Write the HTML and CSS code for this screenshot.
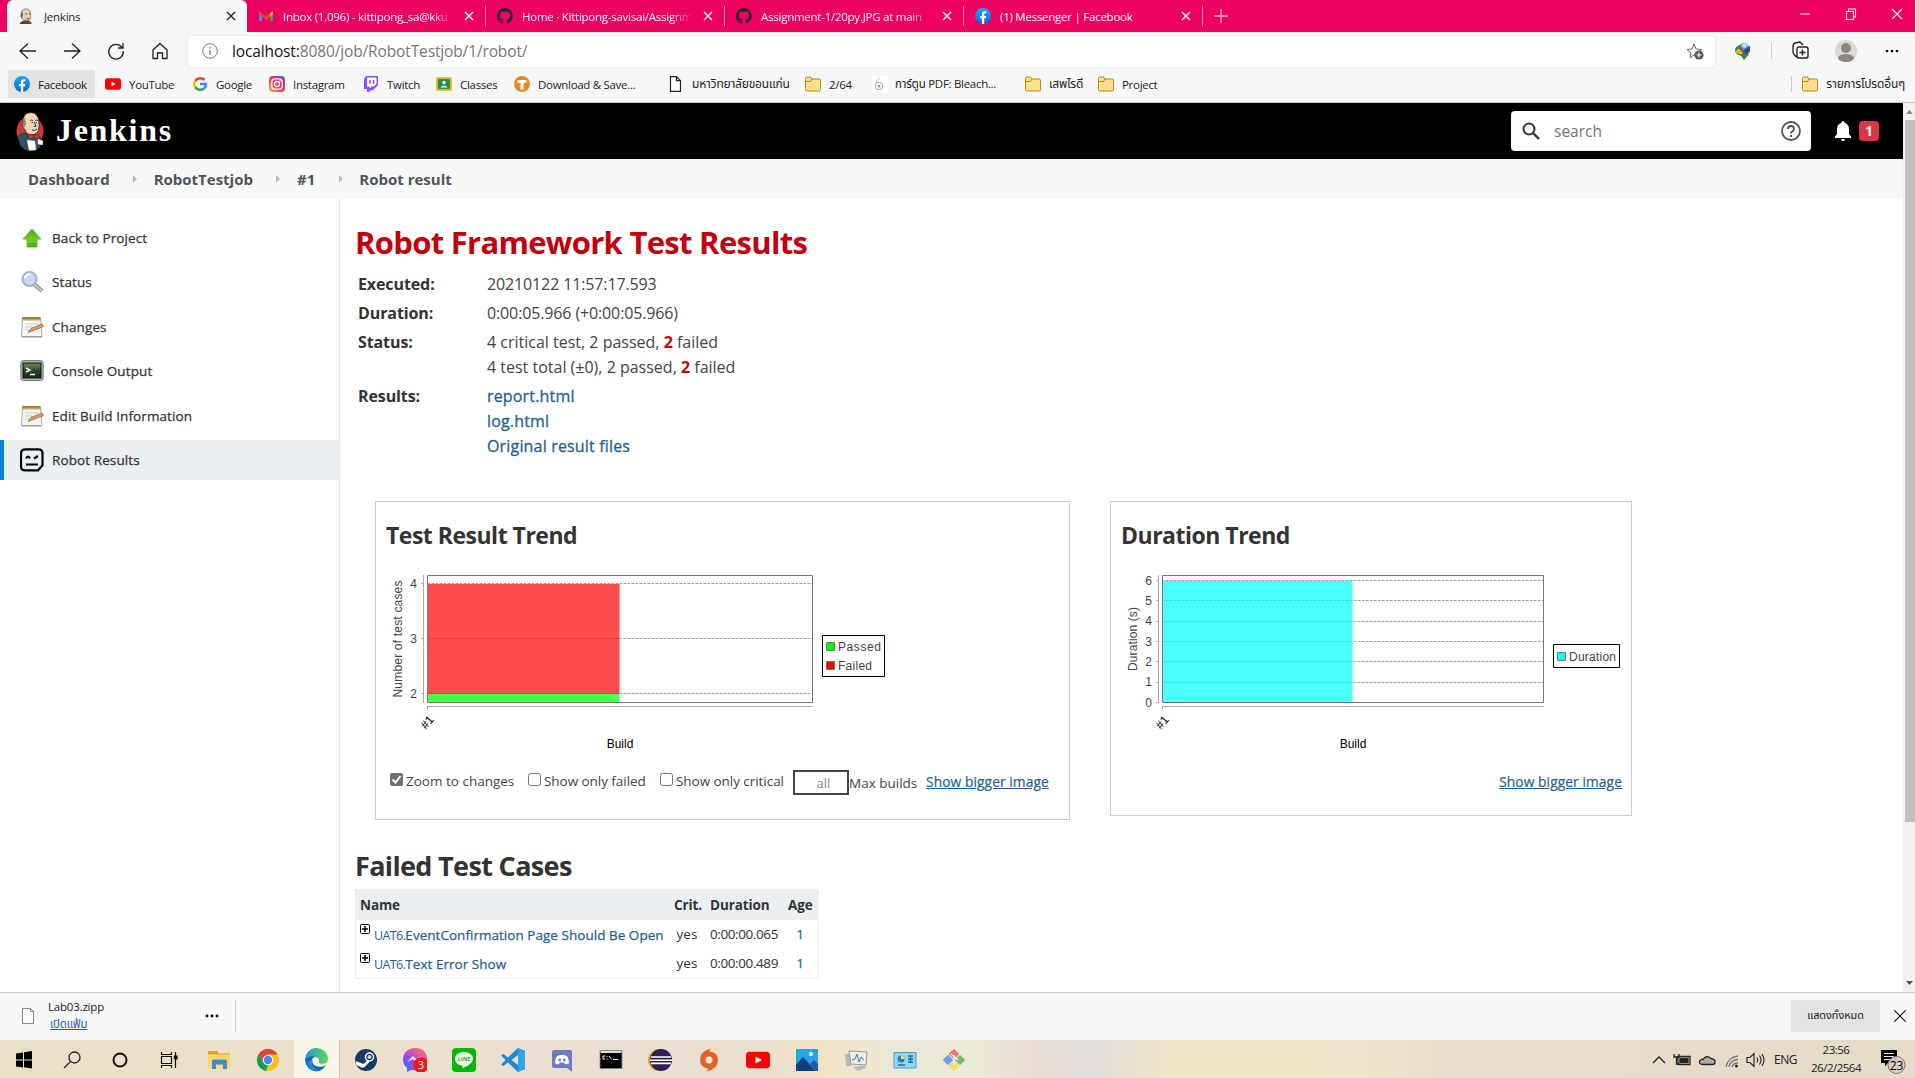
FILE: index.html
```html
<!DOCTYPE html>
<html lang="en">
<head>
<meta charset="utf-8">
<title>Jenkins</title>
<link rel="stylesheet" href="styles.css">
</head>
<body>
<svg class="defs" width="0" height="0">
  <defs>
    <linearGradient id="insta" x1="0" y1="1" x2="1" y2="0"><stop offset="0" stop-color="#fdc14b"/><stop offset=".4" stop-color="#f4423f"/><stop offset=".7" stop-color="#c72e92"/><stop offset="1" stop-color="#5b4fd6"/></linearGradient>
    <linearGradient id="msg" x1="0" y1="1" x2=".7" y2="0"><stop offset="0" stop-color="#0a8cff"/><stop offset=".5" stop-color="#9a45f5"/><stop offset="1" stop-color="#ff6a72"/></linearGradient>
    <linearGradient id="fb" x1="0" y1="0" x2="0" y2="1"><stop offset="0" stop-color="#1ba7f8"/><stop offset="1" stop-color="#0866d8"/></linearGradient>
    <linearGradient id="edgeTop" x1="0" y1="0" x2="1" y2="0"><stop offset="0" stop-color="#2196d8"/><stop offset="1" stop-color="#5fd85a"/></linearGradient>
    <linearGradient id="arrow" x1="0" y1="0" x2="0" y2="1"><stop offset="0" stop-color="#4e9a1a"/><stop offset=".6" stop-color="#6fd32a"/><stop offset="1" stop-color="#4aa516"/></linearGradient>
    <linearGradient id="term" x1="0" y1="0" x2="0" y2="1"><stop offset="0" stop-color="#6d8f5b"/><stop offset=".5" stop-color="#2b4a2b"/><stop offset="1" stop-color="#14281a"/></linearGradient>
    <symbol id="i-jenkins" viewBox="0 0 28 40">
      <ellipse cx="14" cy="20" rx="13.500" ry="14.500" fill="#d33833"/>
      <path d="M2 25Q6 21 12 22l8 1 5 4-1 9-4 3H9L4 34Z" fill="#335061" stroke="#1d2f3a" stroke-width=".6"/>
      <path d="M7 12Q6 2 15 1.500Q23 2 23 12Q24 22 18 23.500Q11 25 9 19Q6 17 7 12Z" fill="#f0d6b7" stroke="#231f20" stroke-width=".8"/>
      <path d="M8 8Q5 12 8 17L10 13 9 7Z" fill="#8b8176"/>
      <path d="M14 9.500q1.500-1 3 0m2.500 0q1.500-1 2.500 0M15.500 11.500h1.500m3 0h1M16 19q3 1.500 5-1M18.500 11l1.500 4.500h-2" fill="none" stroke="#231f20" stroke-width=".9"/>
      <path d="M13 23l5 2 5-2v5l-5-2-5 2z" fill="#d33833" stroke="#81251f" stroke-width=".6"/>
      <path d="M11 29l8 1 1 9-7 .5zM22 28l5 2-.5 4-4.500-1z" fill="#fff" stroke="#bbb" stroke-width=".4"/>
    </symbol>
    <symbol id="i-fb" viewBox="0 0 16 16"><circle cx="8" cy="8" r="8" fill="url(#fb)"/><path d="M6.900 16V10.200H5V8h1.900V6.300C6.900 4.300 8 3.300 9.800 3.300c.8 0 1.500.1 1.500.1v1.800h-.9c-.9 0-1.200.5-1.200 1.100V8h2l-.3 2.200H9.200V16z" fill="#fff"/></symbol>
    <symbol id="i-github" viewBox="0 0 16 16"><path d="M8 0a8 8 0 0 0-2.530 15.590c.4.070.55-.17.55-.38v-1.490C3.800 14.200 3.330 12.650 3.330 12.650c-.36-.92-.89-1.170-.89-1.170-.73-.5.060-.49.060-.49.8.060 1.230.83 1.230.83.710 1.220 1.870.87 2.330.66.070-.52.280-.87.510-1.070C4.800 11.210 2.930 10.520 2.930 7.460c0-.87.310-1.590.820-2.150-.08-.2-.36-1.020.08-2.120 0 0 .67-.21 2.200.82a7.600 7.600 0 0 1 4 0c1.530-1.030 2.200-.82 2.200-.82.440 1.100.16 1.920.08 2.120.51.560.82 1.280.82 2.150 0 3.070-1.870 3.750-3.650 3.950.29.250.54.730.54 1.480v2.200c0 .21.150.46.550.38A8 8 0 0 0 8 0z" fill="#24292e"/></symbol>
    <symbol id="i-folder" viewBox="0 0 16 15"><path d="M.5 2a1.500 1.500 0 0 1 1.500-1.500h3.500L7 2.500h7A1.500 1.500 0 0 1 15.500 4v9a1.500 1.500 0 0 1-1.500 1.500H2A1.500 1.500 0 0 1 .5 13z" fill="#ffe08a" stroke="#b58a12"/><path d="M1 5h4.500L7 2.500" fill="none" stroke="#b58a12"/></symbol>
    <symbol id="i-close" viewBox="0 0 10 10"><path d="M1 1l8 8M9 1l-8 8" fill="none" stroke="currentColor" stroke-width="1.400"/></symbol>
    <symbol id="i-note" viewBox="0 0 24 24"><path d="M2.500 3h18l1.500 18.500H1.500z" fill="#f6f6f4" stroke="#aaa"/><path d="M2 2h19v3.500H2z" fill="#c9a54b"/><path d="M3 2v2m2-2v2m2-2v2m2-2v2m2-2v2m2-2v2m2-2v2m2-2v2m2-2v2" stroke="#6f6a45"/><path d="M5 9h13M5 12h8M5 15h5" stroke="#c8c8c8"/><path d="M8 17.500l3-4 11-4.500 1.500 2.500L12 16z" fill="#e0a060" stroke="#8a5a2a" stroke-width=".7"/><path d="M2 22h20" stroke="#999"/></symbol>
    <symbol id="i-yt" viewBox="0 0 24 17"><rect width="24" height="17" rx="4" fill="#f00"/><path d="M9.500 5l6.500 3.500-6.500 3.500z" fill="#fff"/></symbol>
    <symbol id="i-plus" viewBox="0 0 10 10"><rect x=".5" y=".5" width="9" height="9" rx="1" fill="#fff" stroke="#000"/><path d="M2 5h6M5 2v6" stroke="#000" stroke-width="1.500"/></symbol>
  </defs>
</svg>

<div class="tabs">
  <div class="tab active"><svg class="fav" viewBox="3 0 24 27"><path d="M7 11Q6 2 15 1.500Q23 2 23 11Q24 20 18 22Q11 23 9 18Q6 16 7 11Z" fill="#e9cfae" stroke="#554b40"/><path d="M7 8Q4 13 8 18l2-6-1-6z" fill="#6d645b"/><path d="M14 10h3m3 0h2M16 18h5" stroke="#43362b" stroke-width="1.500"/><path d="M4 28q2-8 12-7 8 0 9 7z" fill="#49423e"/><path d="M14 22l4 2 4-2v4l-4-2-4 2z" fill="#c33"/></svg><span class="title">Jenkins</span><svg class="x"><use href="#i-close"/></svg></div>
  <div class="tab"><svg class="fav" viewBox="0 0 16 16"><path d="M1 3v10h3V7z" fill="#4285f4"/><path d="M15 3v10h-3V7z" fill="#34a853"/><path d="M1 3l7 5.500L15 3v3.500L8 12 1 6.500z" fill="#ea4335"/><path d="M12 5l3-2v3.500l-3 2.400z" fill="#fbbc04"/></svg><span class="title fade">Inbox (1,096) - kittipong_sa@kku</span><svg class="x"><use href="#i-close"/></svg></div>
  <div class="tab"><svg class="fav"><use href="#i-github"/></svg><span class="title fade">Home · Kittipong-savisai/Assignm</span><svg class="x"><use href="#i-close"/></svg></div>
  <div class="tab"><svg class="fav"><use href="#i-github"/></svg><span class="title fade">Assignment-1/20py.JPG at main</span><svg class="x"><use href="#i-close"/></svg></div>
  <div class="tab"><svg class="fav"><use href="#i-fb"/></svg><span class="title">(1) Messenger | Facebook</span><svg class="x"><use href="#i-close"/></svg></div>
  <svg class="newtab" viewBox="0 0 14 14"><path d="M7 0v14M0 7h14" stroke="#ffb3d0" stroke-width="1.300"/></svg>
  <svg class="wins" viewBox="0 0 104 14"><path d="M1 7h10M47.500 4.500h7v8h-7zM49.500 4V2h7v8h-2M93 2l10 10M103 2L93 12" fill="none" stroke="#fff" stroke-width="1.100"/></svg>
</div>

<div class="toolbar">
  <svg class="nav" viewBox="0 0 168 24" fill="none" stroke="#222" stroke-width="1.300"><path d="M28 12H12M20 4.500L12 12l8 7.500M56 12h16M64 4.500l8 7.500-8 7.500"/><path d="M114 8.500A7.300 7.300 0 1 0 115.300 12M115 4v5h-5"/><path d="M145 11l7-6.500 7 6.500v8.500h-4.500v-5.500h-5v5.500H145z"/></svg>
  <div class="address">
    <svg class="info" viewBox="0 0 16 16"><circle cx="8" cy="8" r="7.300" fill="none" stroke="#777"/><path d="M8 7v5M8 4v1.500" stroke="#777" stroke-width="1.300"/></svg>
    <span class="url"><b>localhost:</b>8080/job/RobotTestjob/1/robot/</span>
    <svg class="star" viewBox="0 0 18 17"><path d="M8 1l2 5 5.500.5L12 10 8 12l-4 3 1-5L1 6.500 6 6z" fill="#fff" stroke="#666"/><circle cx="13" cy="12" r="4.600" fill="#555"/><path d="M13 9.500v5M10.500 12h5" stroke="#fff" stroke-width="1.200"/></svg>
  </div>
  <svg class="tools" viewBox="0 0 170 24"><ellipse cx="14" cy="10.500" rx="6" ry="6.500" fill="#5c93d6"/><path d="M12 5q4-2 6 1l-3 3-3-1z" fill="#c3dcf0"/><path d="M5 12q0-5 5-6l2 4 4 4-2 3q-8 0-9-5z" fill="#2f8a32"/><path d="M5 13l4-4 4 5-2 2z" fill="#d8b93a"/><path d="M9 9l7 6" stroke="#c33" stroke-width="1.200"/><path d="M14 11l6-4v5l-4 4z" fill="#1f4f94"/><path d="M10 15h9l-5 6z" fill="#238a2b"/><path d="M41.500 4v16" stroke="#ccc"/><path d="M67 18q-4-2-4-6V7q0-2 2-3l5-1 3 3" fill="none" stroke="#222" stroke-width="1.400"/><rect x="67" y="8" width="11" height="11" rx="2" fill="#fff" stroke="#222" stroke-width="1.400"/><path d="M72.500 10.500v6M69.500 13.500h6" stroke="#222" stroke-width="1.400"/><circle cx="116" cy="12" r="11" fill="#dad7d4"/><circle cx="116" cy="9" r="5" fill="#8a8683"/><ellipse cx="116" cy="19" rx="8" ry="4" fill="#8a8683"/><circle cx="157" cy="12" r="1.300"/><circle cx="162" cy="12" r="1.300"/><circle cx="167" cy="12" r="1.300"/></svg>
</div>

<div class="bookmarks">
  <div class="bm on"><svg><use href="#i-fb"/></svg>Facebook</div>
  <div class="bm"><svg viewBox="0 0 24 20"><use href="#i-yt" width="24" height="20"/></svg>YouTube</div>
  <div class="bm"><svg viewBox="0 0 16 16" fill="none" stroke-width="2.600"><path d="M3.200 5A6 6 0 0 1 12.500 4" stroke="#ea4335"/><path d="M3.200 11A6 6 0 0 1 3.200 5" stroke="#fbbc05"/><path d="M12 12.500A6 6 0 0 1 3.200 11" stroke="#34a853"/><path d="M8 8h6Q14 11 12 12.500" stroke="#4285f4"/></svg>Google</div>
  <div class="bm"><svg viewBox="0 0 16 16"><rect width="16" height="16" rx="4" fill="url(#insta)"/><rect x="2.800" y="2.800" width="10.400" height="10.400" rx="3" fill="none" stroke="#fff" stroke-width="1.300"/><circle cx="8" cy="8" r="2.500" fill="none" stroke="#fff" stroke-width="1.300"/><circle cx="11" cy="5" r=".8" fill="#fff"/></svg>Instagram</div>
  <div class="bm"><svg viewBox="0 0 16 16"><path d="M1 3l2-3h12v9l-5 5H8l-2 2H4v-3H1z" fill="#9146ff"/><path d="M4 1.500h9.500V8L11 10.500H8.500l-2 2v-2H4z" fill="#fff"/><path d="M7 4v4M10.500 4v4" stroke="#9146ff" stroke-width="1.400"/></svg>Twitch</div>
  <div class="bm"><svg viewBox="0 0 16 16"><rect y="1" width="16" height="14" rx="1" fill="#e8b72b"/><rect x="2" y="3" width="12" height="10" fill="#23904f"/><circle cx="8" cy="6.500" r="1.700" fill="#fff"/><path d="M4.500 11.500q3.500-4 7 0z" fill="#fff"/></svg>Classes</div>
  <div class="bm"><svg viewBox="0 0 16 16"><circle cx="8" cy="8" r="8" fill="#e38a1e"/><path d="M3.500 4h9v3H9.500v6.500h-3V7h-3z" fill="#fff"/></svg>Download &amp; Save...</div>
  <div class="bm"><svg viewBox="0 0 16 16"><path d="M2.500.7h6l4 4v10.600h-10zM8.500.7v4h4" fill="#fff" stroke="#222" stroke-width="1.200"/></svg><span class="th">มหาวิทยาลัยขอนแก่น</span></div>
  <div class="bm"><svg><use href="#i-folder"/></svg>2/64</div>
  <div class="bm pdf"><svg viewBox="0 0 16 16"><rect width="16" height="16" fill="#fff"/><circle cx="7" cy="10" r="3.800" fill="none" stroke="#aaa"/><circle cx="7" cy="10" r="1.500" fill="#999"/><path d="M4 8q0-4 4-6" fill="none" stroke="#bbb"/></svg><span><span class="th">การ์ตูน</span> PDF: Bleach...</span></div>
  <div class="bm"><svg><use href="#i-folder"/></svg><span class="th">เสพไรดี</span></div>
  <div class="bm"><svg><use href="#i-folder"/></svg>Project</div>
  <div class="bm other"><svg><use href="#i-folder"/></svg><span class="th">รายการโปรดอื่นๆ</span></div>
</div>

<div class="view">
  <div class="page">
    <header class="head">
      <svg class="mascot"><use href="#i-jenkins"/></svg>
      <span class="brand">Jenkins</span>
      <div class="search">
        <svg class="mag" viewBox="0 0 18 18"><circle cx="7" cy="7" r="5.500" fill="none" stroke="#333" stroke-width="2"/><path d="M11 11l6 6" stroke="#333" stroke-width="2.400"/></svg>
        <span>search</span>
        <svg class="help" viewBox="0 0 20 20"><circle cx="10" cy="10" r="9" fill="none" stroke="#4d545d" stroke-width="1.800"/><path d="M7 8q0-3 3-3t3 3q0 1.500-1.500 2.300T10 12.500M10 14v2" fill="none" stroke="#4d545d" stroke-width="1.900"/></svg>
      </div>
      <svg class="bell" viewBox="0 0 16 20"><path d="M8 0q1.500 0 1.500 1.800Q14 3.200 14 8v5l2 2.500V17H0v-1.500L2 13V8q0-4.800 4.500-6.200Q6.500 0 8 0zM6 18h4q0 2-2 2t-2-2z" fill="#fff"/></svg>
      <span class="badge">1</span>
    </header>
    <nav class="crumbs"><span>Dashboard</span><i></i><span>RobotTestjob</span><i></i><span>#1</span><i></i><span>Robot result</span></nav>
    <div class="body">
      <aside class="side">
        <div class="task"><svg viewBox="0 0 24 24"><path d="M12 3l9 10h-4v8H7v-8H3z" fill="url(#arrow)" stroke="#5db52a" stroke-width=".8"/></svg>Back to Project</div>
        <div class="task"><svg viewBox="0 0 24 24"><path d="M14 14l8 7" stroke="#888" stroke-width="4"/><path d="M14 14l8 7" stroke="#c9c9c9" stroke-width="2"/><circle cx="9.500" cy="9" r="7" fill="#c3dbf7" stroke="#a9b4c4" stroke-width="2.200"/><path d="M5 8q1-4 5-4" stroke="#fff" stroke-width="2" fill="none"/></svg>Status</div>
        <div class="task"><svg><use href="#i-note"/></svg>Changes</div>
        <div class="task"><svg viewBox="0 0 24 24"><rect x=".8" y="1.500" width="22.400" height="20" rx="2.500" fill="#b5b8b2" stroke="#7c7f79"/><rect x="3" y="4" width="18" height="15" fill="url(#term)" stroke="#111"/><path d="M6 9l4 2-4 2M10 15.500h5" stroke="#fff" stroke-width="1.400" fill="none"/></svg>Console Output</div>
        <div class="task"><svg><use href="#i-note"/></svg>Edit Build Information</div>
        <div class="task sel"><svg viewBox="0 0 24 24" fill="none" stroke="#000" stroke-width="2.200"><path d="M5.500 1.300h13q4 0 4 4v12l-4.500 5h-13q-4 0-4-4v-13q0-4 4.500-4z"/><path d="M6 10.500q2-4 4 0M14 10.500l4-2.500M6 16.500h12"/></svg>Robot Results</div>
      </aside>
      <main class="main">
        <h1>Robot Framework Test Results</h1>
        <dl class="facts">
          <dt>Executed:</dt><dd class="tight">20210122 11:57:17.593</dd>
          <dt>Duration:</dt><dd class="tight">0:00:05.966 (+0:00:05.966)</dd>
          <dt>Status:</dt><dd>4 critical test, 2 passed, <b>2</b> failed<br>4 test total (±0), 2 passed, <b>2</b> failed</dd>
          <dt>Results:</dt><dd class="links"><a>report.html</a><br><a>log.html</a><br><a>Original result files</a></dd>
        </dl>
        <div class="trends">
          <section class="panel results">
            <h3>Test Result Trend</h3>
            <svg class="chart" width="510" height="190" viewBox="380 568 510 190">
              <path d="M427.500 583.500H813M427.500 638.500H813M427.500 693.500H813" stroke="#999" stroke-dasharray="2.500 1.500"/>
              <path d="M428 584h191.500v110H428z" fill="#f00" fill-opacity=".7"/>
              <path d="M428 694h191.500v8.500H428z" fill="#0f0" fill-opacity=".7"/>
              <path d="M427.500 575.500h385v127h-385z" fill="none" stroke="#777"/>
              <path d="M423.500 575v128M421 583.500h2M421 638.500h2M421 693.500h2M427 706.500h386M427.500 706v3" stroke="#aaa" fill="none"/>
              <text class="tick" x="417" y="588" text-anchor="end">4</text><text class="tick" x="417" y="643" text-anchor="end">3</text><text class="tick" x="417" y="698" text-anchor="end">2</text>
              <text class="tick" transform="translate(402 697.500) rotate(-90)" textLength="117">Number of test cases</text>
              <text class="num" transform="translate(426 730) rotate(-50)">#1</text>
              <text class="axis" x="620" y="748" text-anchor="middle">Build</text>
              <path d="M822.500 635.500h62v41h-62z" fill="#fff" stroke="#000"/>
              <path d="M826.500 642.500h8v8h-8z" fill="#0f0" stroke="#777"/><path d="M826.500 661.500h8v8h-8z" fill="#f00" stroke="#777"/>
              <text class="tick" x="838" y="651" textLength="43">Passed</text><text class="tick" x="838" y="670" textLength="34">Failed</text>
            </svg>
            <div class="opts">
              <span class="cb"><svg viewBox="0 0 13 13"><rect width="13" height="13" rx="2" fill="#6f6f6f"/><path d="M2.500 6.500l3 3 5-6.500" fill="none" stroke="#fff" stroke-width="2"/></svg><span>Zoom to changes</span></span>
              <span class="cb"><svg viewBox="0 0 13 13"><rect x=".5" y=".5" width="12" height="12" rx="2" fill="#fff" stroke="#767676"/></svg><span>Show only failed</span></span>
              <span class="cb"><svg viewBox="0 0 13 13"><rect x=".5" y=".5" width="12" height="12" rx="2" fill="#fff" stroke="#767676"/></svg><span>Show only critical</span></span>
              <span class="max"><span class="box">all</span><span class="lbl">Max builds</span></span>
              <a class="big">Show bigger image</a>
            </div>
          </section>
          <section class="panel duration">
            <h3>Duration Trend</h3>
            <svg class="chart" width="510" height="190" viewBox="1115 568 510 190">
              <path d="M1162 580.500h382M1162 600.500h382M1162 621.500h382M1162 641.500h382M1162 661.500h382M1162 682.500h382" stroke="#999" stroke-dasharray="2.500 1.500"/>
              <path d="M1163 581h189.500v121.500h-189.500z" fill="#0ff" fill-opacity=".7"/>
              <path d="M1162.500 575.500h381v127h-381z" fill="none" stroke="#777"/>
              <path d="M1158.500 575v128M1156 580.500h2M1156 600.500h2M1156 621.500h2M1156 641.500h2M1156 661.500h2M1156 682.500h2M1156 702.500h2M1162 706.500h382M1162.500 706v3" stroke="#aaa" fill="none"/>
              <text class="tick" x="1152" y="585" text-anchor="end">6</text><text class="tick" x="1152" y="605" text-anchor="end">5</text><text class="tick" x="1152" y="625" text-anchor="end">4</text><text class="tick" x="1152" y="646" text-anchor="end">3</text><text class="tick" x="1152" y="666" text-anchor="end">2</text><text class="tick" x="1152" y="686" text-anchor="end">1</text><text class="tick" x="1152" y="707" text-anchor="end">0</text>
              <text class="tick" transform="translate(1137 671) rotate(-90)" textLength="64">Duration (s)</text>
              <text class="num" transform="translate(1161 730) rotate(-50)">#1</text>
              <text class="axis" x="1353" y="748" text-anchor="middle">Build</text>
              <path d="M1553.500 644.500h66v23h-66z" fill="#fff" stroke="#000"/><path d="M1557.500 652.500h8v8h-8z" fill="#0ff" stroke="#777"/>
              <text class="tick" x="1569" y="661" textLength="47">Duration</text>
            </svg>
            <div class="opts end"><a class="big">Show bigger image</a></div>
          </section>
        </div>
        <h2>Failed Test Cases</h2>
        <table class="failed">
          <colgroup><col class="c1"><col class="c2"><col class="c3"><col class="c4"></colgroup>
          <tr><th>Name</th><th>Crit.</th><th>Duration</th><th>Age</th></tr>
          <tr><td><svg class="plus"><use href="#i-plus"/></svg><a><span class="suite">UAT6.</span>EventConfirmation Page Should Be Open</a></td><td class="mid">yes</td><td class="time">0:00:00.065</td><td class="mid"><a>1</a></td></tr>
          <tr><td><svg class="plus"><use href="#i-plus"/></svg><a><span class="suite">UAT6.</span>Text Error Show</a></td><td class="mid">yes</td><td class="time">0:00:00.489</td><td class="mid"><a>1</a></td></tr>
        </table>
      </main>
    </div>
  </div>
  <div class="scroll"><svg width="12" height="17" viewBox="0 0 12 17"><path d="M3 11h7L6.500 7z" fill="#888"/></svg><div class="thumb"></div><svg class="dn" width="12" height="17" viewBox="0 0 12 17"><path d="M3 6h7l-3.500 4z" fill="#505050"/></svg></div>
</div>

<div class="downloads">
  <svg class="file" viewBox="0 0 12 16"><path d="M.5.5h8l3 3v12H.5zM8.500.5v3h3" fill="#fff" stroke="#888"/></svg>
  <div class="dl"><span>Lab03.zipp</span><a class="th">เปิดแฟ้ม</a></div>
  <svg class="dots" viewBox="0 0 14 4"><circle cx="2" cy="2" r="1.400"/><circle cx="7" cy="2" r="1.400"/><circle cx="12" cy="2" r="1.400"/></svg>
  <div class="rule"></div>
  <div class="all th">แสดงทั้งหมด</div>
  <svg class="shut" viewBox="0 0 12 12"><path d="M0 0l12 12M12 0L0 12" stroke="#222" stroke-width="1.200"/></svg>
</div>

<div class="taskbar">
  <div class="apps">
    <svg viewBox="0 0 24 24"><path d="M4 5.500l7-1V11.500H4zM12 4.300L20 3v8.500h-8zM4 12.500h7v7l-7-1zM12 12.500h8V20.500l-8-1.200z"/></svg>
    <svg viewBox="0 0 24 24" fill="none" stroke="#222" stroke-width="1.300"><circle cx="14.500" cy="9.500" r="5.500"/><path d="M10.500 13.500L4 20"/></svg>
    <svg viewBox="0 0 24 24"><circle cx="12" cy="12" r="6.500" fill="none" stroke="#111" stroke-width="2"/></svg>
    <svg viewBox="0 0 24 24" fill="none" stroke="#111" stroke-width="1.200"><path d="M4.500 4v2.500h10V4M4.500 8.500h10v7h-10zM4.500 20v-2.500h10V20M18.500 4v16"/><path d="M17.500 8h2.500v3h-2.500z" fill="#111"/></svg>
    <svg viewBox="0 0 24 24"><path d="M1 3h9l2 2.500h11V20H1z" fill="#d9a52b"/><path d="M1 6.500h22v14H1z" fill="#fbd766"/><path d="M5 13.500q0-2 2-2h11q2 0 2 2V21h-4v-4.500H9V21H5z" fill="#3c8ed0"/></svg>
    <svg viewBox="0 0 24 24"><circle cx="12" cy="12" r="11" fill="#fbc116"/><path d="M2.500 6.500A11 11 0 0 1 21.600 6.500H12L7.200 14.800z" fill="#db4437"/><path d="M2.500 6.500L7.300 14.800 12 17l-2 5.900A11 11 0 0 1 2.500 6.500z" fill="#0f9d58"/><circle cx="12" cy="12" r="5.200" fill="#fff"/><circle cx="12" cy="12" r="4.200" fill="#4285f4"/></svg>
    <svg class="on" viewBox="0 0 24 24"><path d="M0 12A12 12 0 0 1 24 11Q24 16 18 16q-4 0-3.500-3Q15 9 11 9 4 9 0 12z" fill="url(#edgeTop)"/><path d="M0 12Q3 7.500 10 8q-4 3-2 7t8 4q4 0 6-2-4 7-11 7Q1 22 0 12z" fill="#1268bd"/><path d="M8 12q-3 8 6 11-8 1-11-6-1-5 5-5z" fill="#1b8fd6"/></svg>
    <svg viewBox="0 0 24 24"><circle cx="12" cy="12" r="11" fill="#173a66"/><circle cx="15.500" cy="9" r="4" fill="none" stroke="#fff" stroke-width="1.500"/><circle cx="15.500" cy="9" r="2" fill="#c7d5e5"/><path d="M1.500 13l8 3 4-4 2 2-4 4q-2 3-5 1l-4-2z" fill="#fff"/></svg>
    <svg viewBox="0 0 24 24"><path d="M12 0C5 0 0 5 0 11.500c0 3.500 1.500 6.500 4 8.500v4l4-2q13 2 16-10Q24 0 12 0z" fill="url(#msg)"/><path d="M4 14l6-6 3 3 5-3-5 6-3-3z" fill="#fff"/><circle cx="18" cy="17" r="7.800" fill="#f01818"/><text x="18" y="21" text-anchor="middle" font-size="11" fill="#fff">3</text></svg>
    <svg viewBox="0 0 24 24"><rect width="24" height="24" rx="4" fill="#00b900"/><path d="M12 4c-5 0-9 3-9 7 0 3.500 3 6 7 6.600.8.200 0 2.400.6 2.400S21 16 21 11c0-4-4-7-9-7z" fill="#fff"/><text x="12" y="13.300" text-anchor="middle" font-size="5.500" font-weight="700" fill="#00b900">LINE</text></svg>
    <svg viewBox="0 0 24 24"><path d="M17 0l7 3v18l-7 3L7 14.500 2.500 18 0 16.500 4.500 12 0 7.500 2.500 6 7 9.500zM17 7l-6.500 5 6.500 5z" fill="#1f8ad2"/><path d="M17 0l7 3v18l-7 3z" fill="#2ba6ee"/></svg>
    <svg viewBox="0 0 24 24"><path d="M2 4q0-2 2-2h16q2 0 2 2v20l-5-4H4q-2 0-2-2z" fill="#6b7cc4"/><path d="M7 8q5-2 10 0 2 3 2 7-2 2-4 1l-1-1.500h-4L9 16q-2 1-4-1 0-4 2-7z" fill="#fff"/><circle cx="9.700" cy="12" r="1.400" fill="#6b7cc4"/><circle cx="14.300" cy="12" r="1.400" fill="#6b7cc4"/></svg>
    <svg viewBox="0 0 24 24"><path d="M1 2.500h22v18H1z" fill="#000" stroke="#888" stroke-width=".8"/><path d="M1.500 3h21v2h-21z" fill="#ddd"/><path d="M4 8h2M4 11h2M4 8v3M8 8v1m0 1.500v1M10 8l3 3.500M14 11.500h5" stroke="#fff"/></svg>
    <svg viewBox="0 0 24 24"><circle cx="11" cy="12" r="11" fill="#f39a31"/><circle cx="13" cy="12" r="11" fill="#2c2255"/><path d="M3 9h20M2 12.200h22M3 15.400h20" stroke="#fff" stroke-width="1.600"/></svg>
    <svg viewBox="0 0 24 24"><path d="M14 .5q-2 1.500-1.500 3Q21 4 21 12q0 9-11.500 11.500 2-2 1.500-3Q3 19 3 12 3 3 14 .5z" fill="#e5612b"/><circle cx="12" cy="12" r="3.500" fill="#f1e4d7"/></svg>
    <svg viewBox="0 0 24 24"><use href="#i-yt" y="3.500" width="24" height="17"/></svg>
    <svg viewBox="0 0 24 24"><path d="M1 1h22v22H1z" fill="#25a5e5"/><path d="M1 17l7-8 7 7 4-4 4 4v7H1z" fill="#1c5ca8"/><path d="M1 17l7-8 11 14H1z" fill="#123e7c"/><circle cx="16" cy="6" r="2" fill="#fff"/></svg>
    <svg viewBox="0 0 24 24"><path d="M1 6h6v12H2z" fill="#b9bab8"/><path d="M5 3l18 1-1 13-15-1z" fill="#eceeee" stroke="#999"/><path d="M8 12l3-1 2-5 2 8 2-5 3 3" fill="none" stroke="#4683b2"/><path d="M9 19l11-2 2 3-8 3z" fill="#bbb"/></svg>
    <svg viewBox="0 0 24 24"><path d="M1 4.500h22v15.500H1z" fill="#8fd6f6" stroke="#4b9cc9"/><circle cx="8" cy="11" r="3.500" fill="#2c7fc2"/><path d="M8 11V7.500a3.500 3.500 0 0 1 3.500 3.500z" fill="#f8dd63"/><path d="M15 8h5M15 11h5M15 14h5M17.500 8v7M5 17h7" stroke="#1c6fad" stroke-width="1.300"/></svg>
    <svg viewBox="0 0 24 24"><g transform="rotate(45 12 12)"><rect x="4" y="4" width="7.500" height="7.500" rx="1" fill="#ef7478"/><rect x="12.500" y="4" width="7.500" height="7.500" rx="1" fill="#74bd67"/><rect x="4" y="12.500" width="7.500" height="7.500" rx="1" fill="#6d9fe8"/><rect x="12.500" y="12.500" width="7.500" height="7.500" rx="1" fill="#f3dc6a"/></g><path d="M12 7v10M9 6l7 6" stroke="#fff" stroke-width="1.100"/></svg>
  </div>
  <div class="tray">
    <svg class="icons" width="114" height="24" viewBox="0 0 114 24" fill="none" stroke="#222" stroke-width="1.300"><path d="M1 15l6-6 6 6"/><path d="M26 8.500h12v8H26z"/><path d="M28 10.500h8v4h-8z" fill="#222"/><path d="M22 6v3h5V6M24.500 9v7h3"/><path d="M50 16.500q-4-1-2-4 2-2 3-1 3-5 8-1 5 1 4 4 0 2-3 2h-8z" fill="#aaa"/><path d="M74 19A13 13 0 0 1 86 8M77 19a9 9 0 0 1 9-7.500M80 19a6 6 0 0 1 6-4" stroke="#777"/><circle cx="84.500" cy="18" r="1.500" fill="#222" stroke="none"/><path d="M95 9.500h3l4-4v13l-4-4h-3zM105 9.500q1.500 2.500 0 5M107.500 7.500q3 4.500 0 9M110 6q4 6 0 12" stroke-width="1.100"/></svg>
    <span class="lang">ENG</span>
    <div class="clock"><span>23:56</span><span>26/2/2564</span></div>
    <svg class="note" width="28" height="28" viewBox="0 0 28 28"><path d="M1 4h16v13H8l-3 3v-3H1z" fill="#000"/><path d="M4 7.500h10M4 10.500h10M4 13.500h10" stroke="#eee"/><circle cx="16.500" cy="19" r="8.500" fill="#d8cfc4" stroke="#777" fill-opacity=".93"/><text x="16.500" y="23.500" text-anchor="middle" font-size="12">23</text></svg>
  </div>
</div>
</body>
</html>
```
FILE: styles.css
```css
* { box-sizing: border-box; }
body { margin: 0; width: 1915px; height: 1078px; overflow: hidden; display: flex; flex-direction: column; background: #fff; color: #333; font-family: "Open Sans", "Noto Sans", sans-serif; }
svg { flex: none; display: block; }
.defs { position: absolute; }
.th { font-family: "Noto Sans Thai", "Open Sans", sans-serif; }

.tabs { height: 32px; flex: none; display: flex; background: #ec0060; padding-left: 7px; align-items: stretch; }
.tab { width: 239px; display: flex; align-items: center; padding: 0 11px; color: #fff; font-size: 11.5px; letter-spacing: -0.25px; border-right: 1px solid #ff8fbb; border-image: linear-gradient(transparent 20%, #ff8fbb 20% 80%, transparent 80%) 1; }
.tab.active { width: 240px; background: #f7f7f7; color: #222; border: 0; border-radius: 6px 6px 0 0; }
.fav { width: 16px; height: 16px; margin-right: 9px; }
.active .fav { margin-right: 10px; }
.title { flex: 1; overflow: hidden; white-space: nowrap; }
.title.fade { -webkit-mask-image: linear-gradient(90deg, #000 88%, transparent); mask-image: linear-gradient(90deg, #000 88%, transparent); }
.x { width: 10px; height: 10px; margin-left: 11px; }
.newtab { width: 14px; height: 14px; margin: 9px 0 0 11px; }
.wins { width: 104px; height: 14px; margin: 7px 12px 0 auto; }

.toolbar { height: 38px; flex: none; background: #f7f7f7; display: flex; align-items: center; padding-left: 8px; }
.nav { width: 168px; height: 24px; }
.address { width: 1527px; height: 31px; margin: 0 20px 0 12px; border-radius: 4px; background: #fff; display: flex; align-items: center; padding: 0 11px 0 14px; box-shadow: 0 0 2px #ddd; }
.info { width: 16px; height: 16px; }
.url { flex: 1; margin-left: 14px; font-size: 15.5px; letter-spacing: -0.13px; color: #767676; }
.url b { font-weight: 400; color: #111; }
.star { width: 18px; height: 17px; }
.tools { width: 170px; height: 24px; margin-left: -5px; }

.bookmarks { height: 33px; flex: none; background: #f7f7f7; border-bottom: 1px solid #ccc; display: grid; grid-template-columns: 91px 87px 77px 94px 73px 78px 154px 137px 67px 153px 73px 100px 1fr; padding: 0 8px 5px; color: #222; font-size: 11.5px; letter-spacing: -0.3px; }
.bm { display: flex; align-items: center; gap: 8px; padding: 0 6px; white-space: nowrap; height: 28px; }
.bm svg { width: 16px; height: 16px; }
.bm.on { background: #e3e3e3; width: 87px; }
.bm .th { font-size: 12px; letter-spacing: -0.2px; }
.bm.pdf { gap: 7px; }
.pdf .th { font-size: 11.5px; }
.bm.other { justify-self: end; border-left: 1px solid #ccc; padding: 0 2px 0 10px; height: 16px; margin-top: 6px; }

.view { flex: 1; min-height: 0; display: flex; }
.page { width: 1903px; display: flex; flex-direction: column; overflow: hidden; }
.head { height: 56px; flex: none; background: #000; display: flex; align-items: center; padding-left: 16px; }
.mascot { width: 28px; height: 40px; }
.brand { flex: 1; margin-left: 12px; color: #fff; font: bold 32px/40px "Liberation Serif", serif; letter-spacing: 1.7px; padding-bottom: 2px; }
.search { width: 300px; height: 40px; background: #fff; border-radius: 4px; display: flex; align-items: center; padding: 0 10px 0 11px; font-size: 15.5px; color: #757575; }
.search span { flex: 1; }
.mag { width: 18px; height: 18px; margin-right: 14px; }
.help { width: 20px; height: 20px; }
.bell { width: 16px; height: 20px; margin-left: 24px; }
.badge { width: 20px; height: 20px; margin: 0 24px 0 8px; border-radius: 4px; background: #dc3545; color: #fff; font: bold 14px/20px "Open Sans", sans-serif; text-align: center; }
.crumbs { height: 40px; flex: none; background: #f8f8f8; display: flex; align-items: center; padding-left: 28px; font-size: 15px; font-weight: 700; color: #4d545d; white-space: nowrap; }
.crumbs i { border: 4px solid transparent; border-left-color: #bbb; border-right: 0; margin: 0 16.5px 0 23.5px; }
.body { flex: 1; display: flex; min-height: 0; }

.side { width: 340px; flex: none; border-right: 1px solid #e8e8e8; padding-top: 19px; display: flex; flex-direction: column; gap: 4.400px; }
.task { height: 40px; display: flex; align-items: center; gap: 8px; padding-left: 20px; font-size: 13.5px; letter-spacing: 0.1px; -webkit-text-stroke: 0.25px currentColor; color: #333; }
.task svg { width: 24px; height: 24px; }
.task.sel { background: #eaeff2; border-left: 4px solid #0b84d8; padding-left: 16px; }

.main { flex: 1; padding-left: 15px; }
h1, h2, h3, dl, dd { margin: 0; }
h1 { font-size: 31px; line-height: 44px; margin-top: 21px; color: #c4000a; letter-spacing: -0.7px; }
.facts { display: grid; grid-template-columns: 129px auto; row-gap: 4px; padding-left: 3px; margin-top: 8px; font-size: 16px; line-height: 25px; }
.facts dt { font-weight: 700; letter-spacing: -0.1px; }
.facts dd { color: #444; }
.facts .tight { letter-spacing: -0.13px; }
.facts b { color: #c4000a; }
a, .facts a { color: #1f5f92; }
.links { letter-spacing: 0.17px; -webkit-text-stroke: 0.3px #1f5f92; }
.trends { display: flex; align-items: flex-start; gap: 40px; margin: 42px 0 0 20px; }
.panel { border: 1px solid #ccc; padding-left: 10px; }
.results { width: 695px; height: 319px; }
.duration { width: 522px; height: 315px; }
h3 { font-size: 23px; line-height: 32px; margin-top: 17px; letter-spacing: -0.5px; }
.chart { margin: 17px 0 0 -6px; }
.tick { font: 12px "Liberation Sans", sans-serif; fill: #444; }
.axis { font: 12px "Liberation Sans", sans-serif; fill: #000; }
.num { font: 12px "Liberation Sans", sans-serif; fill: #000; }
.opts { display: flex; align-items: center; height: 30px; margin: 8px 20px 0 4px; font-size: 13.500px; white-space: nowrap; color: #444; }
.cb { display: flex; align-items: center; gap: 3px; width: 138px; }
.cb + .cb { width: 132px; letter-spacing: -0.05px; }
.cb + .cb + .cb { width: 133px; }
.cb svg { width: 13px; height: 13px; margin-top: -3px; }
.max { display: flex; align-items: center; width: 133px; }
.box { width: 56px; height: 25px; border: 2px solid #444; padding-left: 5px; text-align: center; color: #888; font-size: 13px; line-height: 22px; background: #fff; margin-top: 2px; }
.lbl { margin-top: 3px; }
.big { text-decoration: underline; font-size: 13.8px; letter-spacing: 0.07px; -webkit-text-stroke: 0.2px currentColor; }
.end { justify-content: flex-end; margin-right: 9px; }
h2 { font-size: 27px; line-height: 38px; margin-top: 27px; letter-spacing: -0.65px; }
.failed { width: 464px; margin-top: 4px; table-layout: fixed; border-collapse: separate; border-spacing: 0; border: 1px solid #eaeff2; font-size: 13.5px; line-height: 19px; }
.failed tr { height: 29px; }
.failed tr:first-child { height: 30px; background: #eaeff2; }
.failed th { text-align: left; padding: 0 4px; letter-spacing: -0.1px; }
.failed td { padding: 0 4px; white-space: nowrap; }
.failed .mid { text-align: center; padding: 0 5px 0 3px; }
.failed td a { -webkit-text-stroke: 0.25px currentColor; letter-spacing: 0.03px; }
.failed .time { letter-spacing: -0.4px; }
.failed .suite { font-size: 12.5px; letter-spacing: -0.6px; -webkit-text-stroke: 0; }
.c1 { width: 314px; } .c2 { width: 36px; } .c3 { width: 78px; } .c4 { width: 34px; }
.plus { width: 10px; height: 10px; display: inline-block; margin-right: 4px; vertical-align: 6px; }

.scroll { width: 12px; background: #f1f1f1; display: flex; flex-direction: column; }
.thumb { height: 702px; margin-left: 2px; background: #c1c1c1; }
.dn { margin-top: auto; }

.downloads { height: 48px; flex: none; background: #f7f7f7; border-top: 1px solid #ccc; display: flex; align-items: center; padding: 0 0 1px 22px; }
.file { width: 12px; height: 16px; }
.dl { width: 157px; margin-left: 14px; display: flex; flex-direction: column; font-size: 11.500px; line-height: 18px; color: #222; letter-spacing: -0.2px; padding-bottom: 1px; }
.dl a { color: #1f5fae; text-decoration: underline; font-size: 11.5px; padding-left: 2px; }
.dots { width: 14px; height: 4px; }
.rule { width: 1px; height: 32px; background: #ccc; margin-left: 16px; }
.all { width: 89px; height: 32px; background: #e4e4e4; margin-left: auto; text-align: center; font-size: 10.8px; line-height: 32px; color: #222; }
.shut { width: 12px; height: 12px; margin: 0 9px 0 14px; }

.taskbar { height: 38px; flex: none; display: flex; justify-content: space-between; background: linear-gradient(90deg, #ecdfc8, #ebe0cb 17%, #ebdfd0 22%, #eadfce 40%, #f1e4c4 43%, #ebe8d8 47%, #ece9d8 51%, #e8dcd4 54%, #e0ddd9 57%, #f0e6c8 61.5%, #efe5ca 71%, #e8dccc 76%, #e6dac9); }
.apps { display: grid; grid-template-columns: 48px 48px 48px 50px repeat(16, 49px); align-items: center; justify-items: center; color: #000; padding-top: 2px; }
.apps svg { width: 24px; height: 24px; }
.apps .on { width: 46px; height: 38px; margin-top: -2px; padding: 8px 11px 6px; background: #f9f4ea; border-right: 1px solid #c8c0b0; }
.tray { display: flex; align-items: center; color: #222; font-size: 12px; padding-right: 7px; }
.icons { margin-top: 2px; }
.lang { margin: 0 11px 0 8px; letter-spacing: -0.5px; }
.clock { width: 56px; display: flex; flex-direction: column; text-align: center; font-size: 11.500px; line-height: 18px; letter-spacing: -0.5px; }
.note { margin-left: 16px; margin-top: 2px; }
```
